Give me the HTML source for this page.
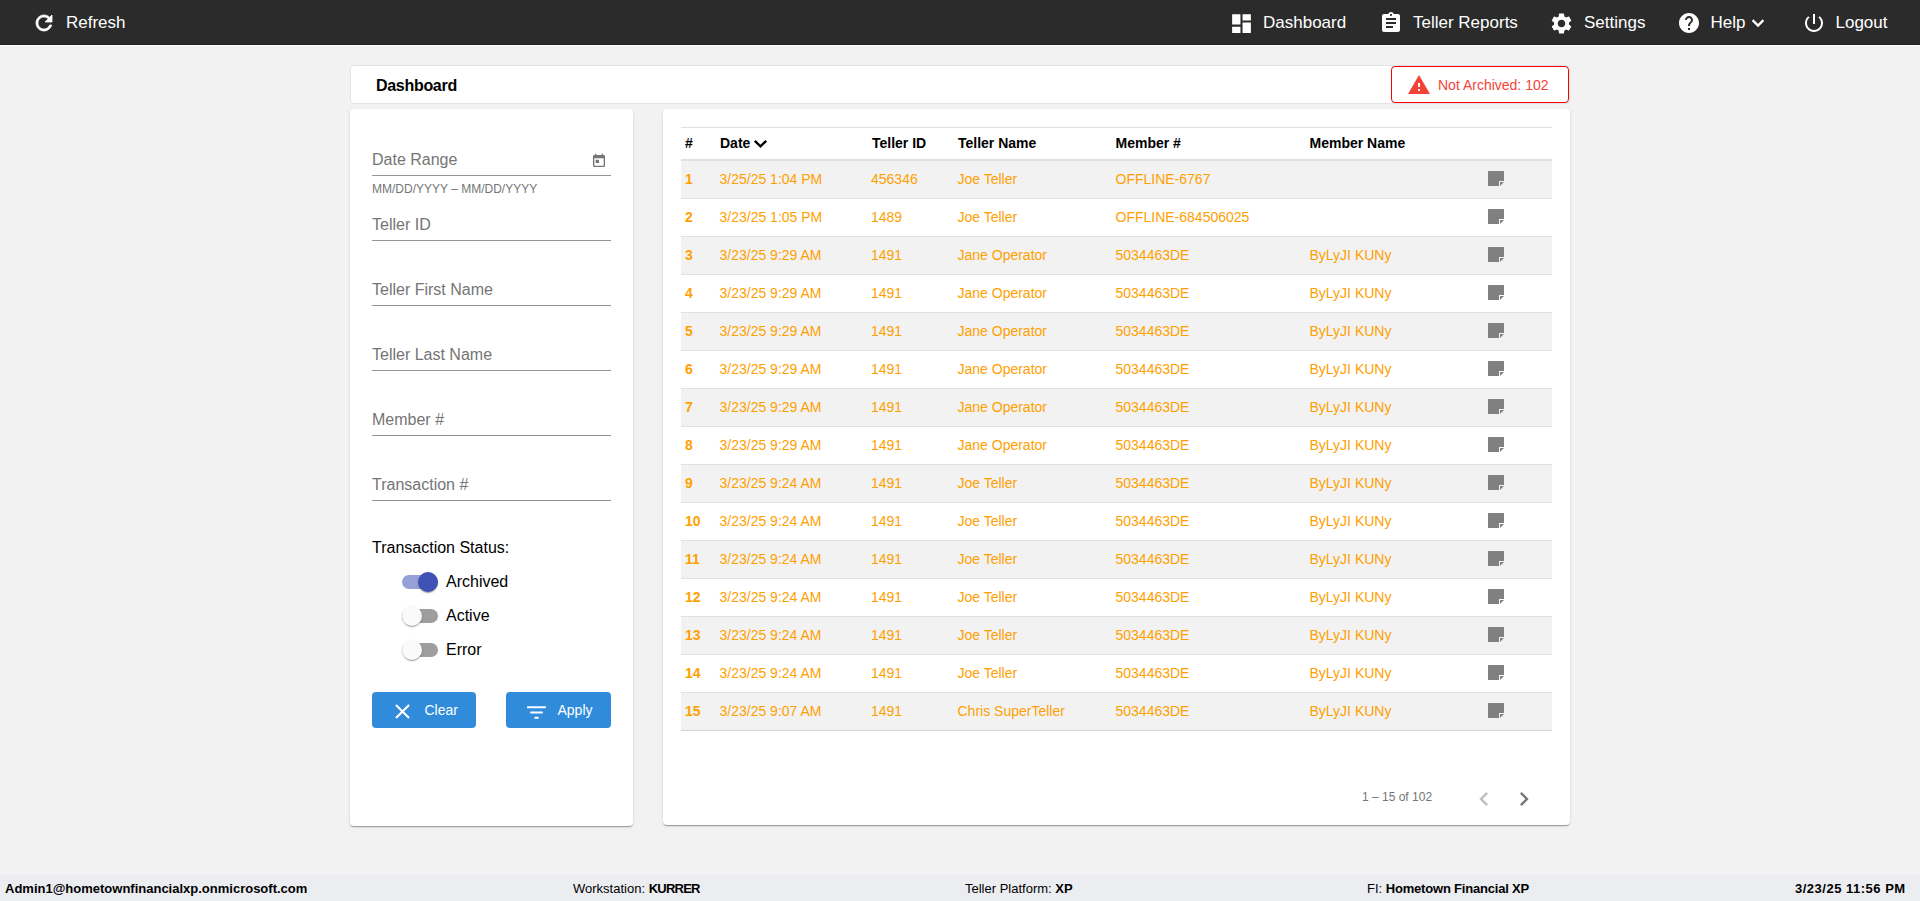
<!DOCTYPE html><html><head><meta charset="utf-8"><title>Dashboard</title><style>
*{margin:0;padding:0;box-sizing:border-box}
html,body{width:1920px;height:901px;overflow:hidden}
body{background:#f2f2f2;font-family:"Liberation Sans",sans-serif;position:relative;color:#000}
.a{position:absolute;white-space:nowrap}
.ic{position:absolute;display:block}
#nav{position:absolute;left:0;top:0;width:1920px;height:44px;background:#2b2b2b}
#nav2{position:absolute;left:0;top:44px;width:1920px;height:1px;background:#222}
#nav3{position:absolute;left:0;top:45px;width:1920px;height:1px;background:#fff}
.nt{position:absolute;top:1px;height:44px;line-height:44px;font-size:17px;color:#fff;white-space:nowrap}
.card{position:absolute;background:#fff;border-radius:4px;box-shadow:0 2px 1px -1px rgba(0,0,0,.2),0 1px 1px 0 rgba(0,0,0,.14),0 1px 3px 0 rgba(0,0,0,.12)}
#hdr{position:absolute;left:350px;top:65px;width:1220px;height:39px;background:#fff;border:1px solid #e3e3e3;border-radius:4px}
#na{position:absolute;left:1391px;top:66px;width:178px;height:37px;border:1px solid #f00;border-radius:4px;background:#fff}
.fld{position:absolute;left:372px;width:239px;height:1px;background:#949494}
.lbl{position:absolute;left:372px;font-size:16px;color:#757575;line-height:20px;white-space:nowrap}
.tg{position:absolute;left:402px;width:36px;height:14px;border-radius:7px}
.th{position:absolute;width:20px;height:20px;border-radius:50%;box-shadow:0 2px 1px -1px rgba(0,0,0,.2),0 1px 1px 0 rgba(0,0,0,.14),0 1px 3px 0 rgba(0,0,0,.12)}
.btn{position:absolute;top:692px;height:36px;background:#318bdb;border-radius:4px}
.bt{position:absolute;font-size:14px;color:#fff;line-height:20px;white-space:nowrap}
.tr{position:absolute;left:681px;width:871px;height:38px;border-bottom:1px solid #dde1e6}
.tr.s{background:#f2f2f2}
.td{position:absolute;top:0;height:37px;line-height:37px;font-size:14px;color:#ffa000;white-space:nowrap}
.th2{position:absolute;top:128px;height:31px;line-height:31px;font-size:14px;font-weight:bold;color:#000;white-space:nowrap}
#foot{position:absolute;left:0;top:875px;width:1920px;height:26px;background:#ecedf0}
.ft{position:absolute;top:876px;height:26px;line-height:26px;font-size:13px;color:#000;white-space:nowrap}
</style></head><body>
<div id="nav">
<svg class="ic" style="left:32px;top:11.1px;width:24px;height:24px" viewBox="0 0 24 24"><path fill="#fff" d="M17.65 6.35C16.2 4.9 14.21 4 12 4c-4.42 0-7.99 3.58-7.99 8s3.57 8 7.99 8c3.73 0 6.84-2.55 7.73-6h-2.08c-.82 2.33-3.04 4-5.65 4-3.31 0-6-2.690-6-6s2.69-6 6-6c1.66 0 3.14.69 4.22 1.78L13 11h7V4l-2.35 2.35z" stroke="#fff" stroke-width="0.8"/></svg>
<div class="nt" style="left:66px">Refresh</div>
<svg class="ic" style="left:1228.9px;top:10.7px;width:25px;height:25px" viewBox="0 0 24 24"><path fill="#fff" d="M3 13h8V3H3v10zm0 8h8v-6H3v6zm10 0h8V11h-8v10zm0-18v6h8V3h-8z"/></svg>
<div class="nt" style="left:1263px">Dashboard</div>
<svg class="ic" style="left:1379px;top:11px;width:24px;height:24px" viewBox="0 0 24 24"><path fill="#fff" d="M19 3h-4.18C14.4 1.84 13.3 1 12 1c-1.3 0-2.4.84-2.82 2H5c-1.1 0-2 .9-2 2v14c0 1.1.9 2 2 2h14c1.1 0 2-.9 2-2V5c0-1.1-.9-2-2-2zm-7 0c.55 0 1 .45 1 1s-.45 1-1 1-1-.45-1-1 .45-1 1-1zm2 14H7v-2h7v2zm3-4H7v-2h10v2zm0-4H7V7h10v2z"/></svg>
<div class="nt" style="left:1413px">Teller Reports</div>
<svg class="ic" style="left:1548.9px;top:10.5px;width:25px;height:25px" viewBox="0 0 24 24"><path fill="#fff" d="M19.14 12.94c.04-.3.06-.61.06-.94 0-.32-.02-.64-.07-.94l2.03-1.58c.18-.14.23-.41.12-.61l-1.92-3.32c-.12-.22-.37-.29-.59-.22l-2.39.96c-.5-.38-1.03-.7-1.62-.94l-.36-2.54c-.04-.24-.24-.41-.48-.41h-3.84c-.24 0-.43.17-.47.41l-.36 2.54c-.59.24-1.13.57-1.62.94l-2.39-.96c-.22-.08-.47 0-.59.22L2.74 8.87c-.12.21-.08.47.12.61l2.03 1.58c-.05.3-.09.63-.09.94s.02.64.07.94l-2.03 1.58c-.18.14-.23.41-.12.61l1.92 3.32c.12.22.37.29.59.22l2.39-.96c.5.38 1.03.7 1.62.94l.36 2.54c.05.24.24.41.48.41h3.84c.24 0 .44-.17.47-.41l.36-2.54c.59-.24 1.13-.56 1.62-.94l2.39.96c.22.08.47 0 .59-.22l1.92-3.32c.12-.22.07-.47-.12-.61l-2.01-1.58zM12 15.6c-1.98 0-3.6-1.62-3.6-3.6s1.62-3.6 3.6-3.6 3.6 1.62 3.6 3.6-1.62 3.6-3.6 3.6z"/></svg>
<div class="nt" style="left:1584px">Settings</div>
<svg class="ic" style="left:1677px;top:11px;width:24px;height:24px" viewBox="0 0 24 24"><path fill="#fff" d="M12 2C6.48 2 2 6.48 2 12s4.48 10 10 10 10-4.48 10-10S17.52 2 12 2zm1 17h-2v-2h2v2zm2.07-7.75l-.9.92C13.45 12.9 13 13.5 13 15h-2v-.5c0-1.1.45-2.1 1.17-2.83l1.24-1.26c.37-.36.59-.86.59-1.41 0-1.1-.9-2-2-2s-2 .9-2 2H8c0-2.21 1.79-4 4-4s4 1.79 4 4c0 .88-.36 1.68-.93 2.25z"/></svg>
<div class="nt" style="left:1710.5px">Help</div>
<svg class="ic" style="left:1746px;top:11px;width:24px;height:24px" viewBox="0 0 24 24"><path fill="#fff" d="M16.59 8.59L12 13.17 7.41 8.59 6 10l6 6 6-6z" stroke="#fff" stroke-width="0.5"/></svg>
<svg class="ic" style="left:1802px;top:11px;width:24px;height:24px" viewBox="0 0 24 24"><path fill="#fff" d="M13 3h-2v10h2V3zm4.83 2.17l-1.42 1.42C17.99 7.86 19 9.81 19 12c0 3.87-3.13 7-7 7s-7-3.13-7-7c0-2.19 1.01-4.14 2.58-5.42L6.17 5.17C4.23 6.82 3 9.26 3 12c0 4.97 4.03 9 9 9s9-4.03 9-9c0-2.74-1.23-5.18-3.17-6.83z"/></svg>
<div class="nt" style="left:1835.5px">Logout</div>
</div><div id="nav2"></div><div id="nav3"></div>
<div id="hdr"></div>
<div class="a" style="left:376px;top:75px;font-size:16px;font-weight:bold;line-height:22px;letter-spacing:-0.3px">Dashboard</div>
<div id="na"></div>
<svg class="ic" style="left:1406.5px;top:73px;width:24px;height:24px" viewBox="0 0 24 24"><path fill="#f44336" d="M1 21h22L12 2 1 21zm12-3h-2v-2h2v2zm0-4h-2v-4h2v4z"/></svg>
<div class="a" style="left:1438px;top:75.4px;font-size:14px;line-height:20px;color:#f44336">Not Archived: 102</div>
<div class="card" style="left:350px;top:109px;width:283px;height:717px"></div>
<div class="lbl" style="top:150px">Date Range</div>
<div class="fld" style="top:175px"></div>
<div class="lbl" style="top:215px">Teller ID</div>
<div class="fld" style="top:240px"></div>
<div class="lbl" style="top:280px">Teller First Name</div>
<div class="fld" style="top:305px"></div>
<div class="lbl" style="top:345px">Teller Last Name</div>
<div class="fld" style="top:370px"></div>
<div class="lbl" style="top:410px">Member #</div>
<div class="fld" style="top:435px"></div>
<div class="lbl" style="top:475px">Transaction #</div>
<div class="fld" style="top:500px"></div>
<svg class="ic" style="left:591px;top:153px;width:16px;height:16px" viewBox="0 0 24 24"><path fill="#757575" d="M19 3h-1V1h-2v2H8V1H6v2H5c-1.11 0-1.99.9-1.99 2L3 19c0 1.1.89 2 2 2h14c1.1 0 2-.9 2-2V5c0-1.1-.9-2-2-2zm0 16H5V8h14v11zM7 10h5v5H7z"/></svg>
<div class="a" style="left:372px;top:182px;font-size:12px;line-height:14px;color:#757575">MM/DD/YYYY – MM/DD/YYYY</div>
<div class="a" style="left:372px;top:538px;font-size:16px;line-height:20px;color:#000">Transaction Status:</div>
<div class="tg" style="top:575px;background:rgba(63,81,181,.54)"></div>
<div class="th" style="left:418px;top:572px;background:#3f51b5"></div>
<div class="a" style="left:446px;top:572px;font-size:16px;line-height:20px">Archived</div>
<div class="tg" style="top:609px;background:rgba(0,0,0,.38)"></div>
<div class="th" style="left:402px;top:606px;background:#fafafa"></div>
<div class="a" style="left:446px;top:606px;font-size:16px;line-height:20px">Active</div>
<div class="tg" style="top:643px;background:rgba(0,0,0,.38)"></div>
<div class="th" style="left:402px;top:640px;background:#fafafa"></div>
<div class="a" style="left:446px;top:640px;font-size:16px;line-height:20px">Error</div>
<div class="btn" style="left:372px;width:104px"></div>
<svg class="ic" style="left:390.1px;top:699.3px;width:25px;height:25px" viewBox="0 0 24 24"><path fill="#fff" d="M19 6.41L17.59 5 12 10.590 6.41 5 5 6.41 10.59 12 5 17.59 6.41 19 12 13.41 17.59 19 19 17.59 13.41 12z"/></svg>
<div class="bt" style="left:424.5px;top:700px">Clear</div>
<div class="btn" style="left:506px;width:105px"></div>
<svg class="ic" style="left:523.7px;top:700px;width:25px;height:25px" viewBox="0 0 24 24"><path fill="#fff" d="M10 18h4v-2h-4v2zM3 6v2h18V6H3zm3 7h12v-2H6v2z"/></svg>
<div class="bt" style="left:557.5px;top:700px">Apply</div>
<div class="card" style="left:663px;top:109px;width:907px;height:716px"></div>
<div class="a" style="left:681px;top:127px;width:871px;height:1px;background:#dde1e6"></div>
<div class="th2" style="left:685px">#</div>
<div class="th2" style="left:720px">Date</div>
<div class="th2" style="left:872px">Teller ID</div>
<div class="th2" style="left:958px">Teller Name</div>
<div class="th2" style="left:1115.5px">Member #</div>
<div class="th2" style="left:1309.5px">Member Name</div>
<svg class="ic" style="left:753px;top:139px;width:15px;height:10px" viewBox="0 0 15 10"><path d="M1.8 1.8L7.5 7.3 13.2 1.8" fill="none" stroke="#000" stroke-width="2.4"/></svg>
<div class="a" style="left:681px;top:159px;width:871px;height:2px;background:#dde1e6"></div>
<div class="tr s" style="top:161px">
<div class="td" style="left:4px;font-weight:bold;">1</div>
<div class="td" style="left:38.5px;">3/25/25 1:04 PM</div>
<div class="td" style="left:190px;">456346</div>
<div class="td" style="left:276.5px;">Joe Teller</div>
<div class="td" style="left:434.5px;">OFFLINE-6767</div>
<div class="td" style="left:628.5px;"></div>
<svg class="ic" style="left:807px;top:10px;width:16px;height:16px" viewBox="0 0 16 16"><path fill="#808080" d="M.5 0H15.5Q16 0 16 .5V10H11V15H.5Q0 15 0 14.5V.5Q0 0 .5 0z"/><path fill="#808080" d="M12 11H16L12 15z"/></svg>
</div>
<div class="tr" style="top:199px">
<div class="td" style="left:4px;font-weight:bold;">2</div>
<div class="td" style="left:38.5px;">3/23/25 1:05 PM</div>
<div class="td" style="left:190px;">1489</div>
<div class="td" style="left:276.5px;">Joe Teller</div>
<div class="td" style="left:434.5px;">OFFLINE-684506025</div>
<div class="td" style="left:628.5px;"></div>
<svg class="ic" style="left:807px;top:10px;width:16px;height:16px" viewBox="0 0 16 16"><path fill="#808080" d="M.5 0H15.5Q16 0 16 .5V10H11V15H.5Q0 15 0 14.5V.5Q0 0 .5 0z"/><path fill="#808080" d="M12 11H16L12 15z"/></svg>
</div>
<div class="tr s" style="top:237px">
<div class="td" style="left:4px;font-weight:bold;">3</div>
<div class="td" style="left:38.5px;">3/23/25 9:29 AM</div>
<div class="td" style="left:190px;">1491</div>
<div class="td" style="left:276.5px;">Jane Operator</div>
<div class="td" style="left:434.5px;">5034463DE</div>
<div class="td" style="left:628.5px;">ByLyJI KUNy</div>
<svg class="ic" style="left:807px;top:10px;width:16px;height:16px" viewBox="0 0 16 16"><path fill="#808080" d="M.5 0H15.5Q16 0 16 .5V10H11V15H.5Q0 15 0 14.5V.5Q0 0 .5 0z"/><path fill="#808080" d="M12 11H16L12 15z"/></svg>
</div>
<div class="tr" style="top:275px">
<div class="td" style="left:4px;font-weight:bold;">4</div>
<div class="td" style="left:38.5px;">3/23/25 9:29 AM</div>
<div class="td" style="left:190px;">1491</div>
<div class="td" style="left:276.5px;">Jane Operator</div>
<div class="td" style="left:434.5px;">5034463DE</div>
<div class="td" style="left:628.5px;">ByLyJI KUNy</div>
<svg class="ic" style="left:807px;top:10px;width:16px;height:16px" viewBox="0 0 16 16"><path fill="#808080" d="M.5 0H15.5Q16 0 16 .5V10H11V15H.5Q0 15 0 14.5V.5Q0 0 .5 0z"/><path fill="#808080" d="M12 11H16L12 15z"/></svg>
</div>
<div class="tr s" style="top:313px">
<div class="td" style="left:4px;font-weight:bold;">5</div>
<div class="td" style="left:38.5px;">3/23/25 9:29 AM</div>
<div class="td" style="left:190px;">1491</div>
<div class="td" style="left:276.5px;">Jane Operator</div>
<div class="td" style="left:434.5px;">5034463DE</div>
<div class="td" style="left:628.5px;">ByLyJI KUNy</div>
<svg class="ic" style="left:807px;top:10px;width:16px;height:16px" viewBox="0 0 16 16"><path fill="#808080" d="M.5 0H15.5Q16 0 16 .5V10H11V15H.5Q0 15 0 14.5V.5Q0 0 .5 0z"/><path fill="#808080" d="M12 11H16L12 15z"/></svg>
</div>
<div class="tr" style="top:351px">
<div class="td" style="left:4px;font-weight:bold;">6</div>
<div class="td" style="left:38.5px;">3/23/25 9:29 AM</div>
<div class="td" style="left:190px;">1491</div>
<div class="td" style="left:276.5px;">Jane Operator</div>
<div class="td" style="left:434.5px;">5034463DE</div>
<div class="td" style="left:628.5px;">ByLyJI KUNy</div>
<svg class="ic" style="left:807px;top:10px;width:16px;height:16px" viewBox="0 0 16 16"><path fill="#808080" d="M.5 0H15.5Q16 0 16 .5V10H11V15H.5Q0 15 0 14.5V.5Q0 0 .5 0z"/><path fill="#808080" d="M12 11H16L12 15z"/></svg>
</div>
<div class="tr s" style="top:389px">
<div class="td" style="left:4px;font-weight:bold;">7</div>
<div class="td" style="left:38.5px;">3/23/25 9:29 AM</div>
<div class="td" style="left:190px;">1491</div>
<div class="td" style="left:276.5px;">Jane Operator</div>
<div class="td" style="left:434.5px;">5034463DE</div>
<div class="td" style="left:628.5px;">ByLyJI KUNy</div>
<svg class="ic" style="left:807px;top:10px;width:16px;height:16px" viewBox="0 0 16 16"><path fill="#808080" d="M.5 0H15.5Q16 0 16 .5V10H11V15H.5Q0 15 0 14.5V.5Q0 0 .5 0z"/><path fill="#808080" d="M12 11H16L12 15z"/></svg>
</div>
<div class="tr" style="top:427px">
<div class="td" style="left:4px;font-weight:bold;">8</div>
<div class="td" style="left:38.5px;">3/23/25 9:29 AM</div>
<div class="td" style="left:190px;">1491</div>
<div class="td" style="left:276.5px;">Jane Operator</div>
<div class="td" style="left:434.5px;">5034463DE</div>
<div class="td" style="left:628.5px;">ByLyJI KUNy</div>
<svg class="ic" style="left:807px;top:10px;width:16px;height:16px" viewBox="0 0 16 16"><path fill="#808080" d="M.5 0H15.5Q16 0 16 .5V10H11V15H.5Q0 15 0 14.5V.5Q0 0 .5 0z"/><path fill="#808080" d="M12 11H16L12 15z"/></svg>
</div>
<div class="tr s" style="top:465px">
<div class="td" style="left:4px;font-weight:bold;">9</div>
<div class="td" style="left:38.5px;">3/23/25 9:24 AM</div>
<div class="td" style="left:190px;">1491</div>
<div class="td" style="left:276.5px;">Joe Teller</div>
<div class="td" style="left:434.5px;">5034463DE</div>
<div class="td" style="left:628.5px;">ByLyJI KUNy</div>
<svg class="ic" style="left:807px;top:10px;width:16px;height:16px" viewBox="0 0 16 16"><path fill="#808080" d="M.5 0H15.5Q16 0 16 .5V10H11V15H.5Q0 15 0 14.5V.5Q0 0 .5 0z"/><path fill="#808080" d="M12 11H16L12 15z"/></svg>
</div>
<div class="tr" style="top:503px">
<div class="td" style="left:4px;font-weight:bold;">10</div>
<div class="td" style="left:38.5px;">3/23/25 9:24 AM</div>
<div class="td" style="left:190px;">1491</div>
<div class="td" style="left:276.5px;">Joe Teller</div>
<div class="td" style="left:434.5px;">5034463DE</div>
<div class="td" style="left:628.5px;">ByLyJI KUNy</div>
<svg class="ic" style="left:807px;top:10px;width:16px;height:16px" viewBox="0 0 16 16"><path fill="#808080" d="M.5 0H15.5Q16 0 16 .5V10H11V15H.5Q0 15 0 14.5V.5Q0 0 .5 0z"/><path fill="#808080" d="M12 11H16L12 15z"/></svg>
</div>
<div class="tr s" style="top:541px">
<div class="td" style="left:4px;font-weight:bold;">11</div>
<div class="td" style="left:38.5px;">3/23/25 9:24 AM</div>
<div class="td" style="left:190px;">1491</div>
<div class="td" style="left:276.5px;">Joe Teller</div>
<div class="td" style="left:434.5px;">5034463DE</div>
<div class="td" style="left:628.5px;">ByLyJI KUNy</div>
<svg class="ic" style="left:807px;top:10px;width:16px;height:16px" viewBox="0 0 16 16"><path fill="#808080" d="M.5 0H15.5Q16 0 16 .5V10H11V15H.5Q0 15 0 14.5V.5Q0 0 .5 0z"/><path fill="#808080" d="M12 11H16L12 15z"/></svg>
</div>
<div class="tr" style="top:579px">
<div class="td" style="left:4px;font-weight:bold;">12</div>
<div class="td" style="left:38.5px;">3/23/25 9:24 AM</div>
<div class="td" style="left:190px;">1491</div>
<div class="td" style="left:276.5px;">Joe Teller</div>
<div class="td" style="left:434.5px;">5034463DE</div>
<div class="td" style="left:628.5px;">ByLyJI KUNy</div>
<svg class="ic" style="left:807px;top:10px;width:16px;height:16px" viewBox="0 0 16 16"><path fill="#808080" d="M.5 0H15.5Q16 0 16 .5V10H11V15H.5Q0 15 0 14.5V.5Q0 0 .5 0z"/><path fill="#808080" d="M12 11H16L12 15z"/></svg>
</div>
<div class="tr s" style="top:617px">
<div class="td" style="left:4px;font-weight:bold;">13</div>
<div class="td" style="left:38.5px;">3/23/25 9:24 AM</div>
<div class="td" style="left:190px;">1491</div>
<div class="td" style="left:276.5px;">Joe Teller</div>
<div class="td" style="left:434.5px;">5034463DE</div>
<div class="td" style="left:628.5px;">ByLyJI KUNy</div>
<svg class="ic" style="left:807px;top:10px;width:16px;height:16px" viewBox="0 0 16 16"><path fill="#808080" d="M.5 0H15.5Q16 0 16 .5V10H11V15H.5Q0 15 0 14.5V.5Q0 0 .5 0z"/><path fill="#808080" d="M12 11H16L12 15z"/></svg>
</div>
<div class="tr" style="top:655px">
<div class="td" style="left:4px;font-weight:bold;">14</div>
<div class="td" style="left:38.5px;">3/23/25 9:24 AM</div>
<div class="td" style="left:190px;">1491</div>
<div class="td" style="left:276.5px;">Joe Teller</div>
<div class="td" style="left:434.5px;">5034463DE</div>
<div class="td" style="left:628.5px;">ByLyJI KUNy</div>
<svg class="ic" style="left:807px;top:10px;width:16px;height:16px" viewBox="0 0 16 16"><path fill="#808080" d="M.5 0H15.5Q16 0 16 .5V10H11V15H.5Q0 15 0 14.5V.5Q0 0 .5 0z"/><path fill="#808080" d="M12 11H16L12 15z"/></svg>
</div>
<div class="tr s" style="top:693px;border-bottom-color:#d3d3d3">
<div class="td" style="left:4px;font-weight:bold;">15</div>
<div class="td" style="left:38.5px;">3/23/25 9:07 AM</div>
<div class="td" style="left:190px;">1491</div>
<div class="td" style="left:276.5px;">Chris SuperTeller</div>
<div class="td" style="left:434.5px;">5034463DE</div>
<div class="td" style="left:628.5px;">ByLyJI KUNy</div>
<svg class="ic" style="left:807px;top:10px;width:16px;height:16px" viewBox="0 0 16 16"><path fill="#808080" d="M.5 0H15.5Q16 0 16 .5V10H11V15H.5Q0 15 0 14.5V.5Q0 0 .5 0z"/><path fill="#808080" d="M12 11H16L12 15z"/></svg>
</div>
<div class="a" style="left:1362px;top:790px;font-size:12px;line-height:14px;color:#757575">1 – 15 of 102</div>
<svg class="ic" style="left:1470px;top:785px;width:28px;height:28px" viewBox="0 0 24 24"><path fill="rgba(0,0,0,.26)" d="M15.41 7.41L14 6l-6 6 6 6 1.41-1.41L10.83 12z"/></svg>
<svg class="ic" style="left:1510px;top:785px;width:28px;height:28px" viewBox="0 0 24 24"><path fill="rgba(0,0,0,.54)" d="M10 6L8.59 7.41 13.17 12l-4.58 4.59L10 18l6-6z"/></svg>
<div id="foot"></div>
<div class="ft" style="left:5px;font-weight:bold">Admin1@hometownfinancialxp.onmicrosoft.com</div>
<div class="ft" style="left:573px">Workstation: <b style="letter-spacing:-0.75px">KURRER</b></div>
<div class="ft" style="left:965px">Teller Platform: <b>XP</b></div>
<div class="ft" style="left:1367px">FI: <b style="letter-spacing:-0.2px">Hometown Financial XP</b></div>
<div class="ft" style="left:1795px;font-weight:bold;letter-spacing:0.5px">3/23/25 11:56 PM</div>
</body></html>
